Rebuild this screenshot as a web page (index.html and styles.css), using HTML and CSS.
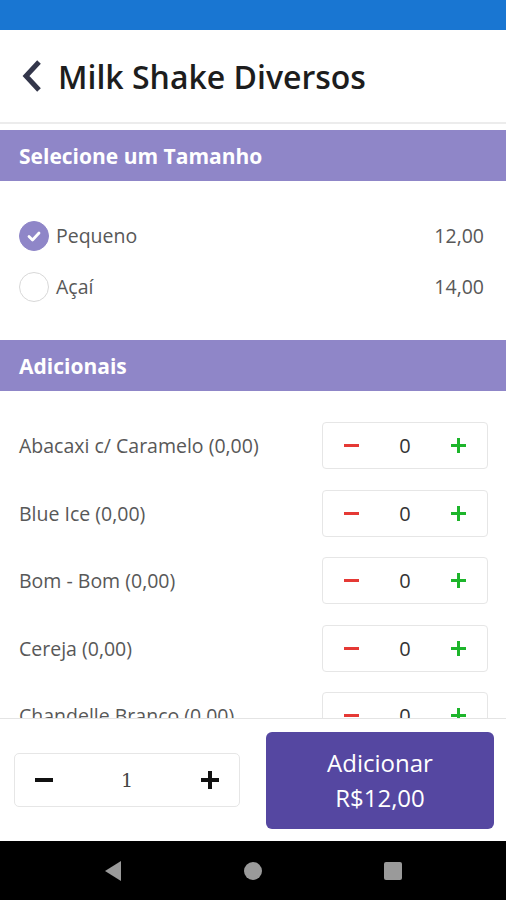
FILE: index.html
```html
<!DOCTYPE html>
<html lang="pt-BR">
<head>
    <meta charset="UTF-8">
    <meta name="viewport" content="width=device-width, initial-scale=1.0">
    <title>Milk Shake Diversos</title>
    <link rel="stylesheet" href="styles.css">
</head>
<body>
    <div class="status-bar"></div>

    <div class="header">
        <svg class="back" width="24" height="34" viewBox="0 0 24 34">
            <path d="M19 3 L6 17 L19 31" fill="none" stroke="#33364a" stroke-width="5" stroke-linejoin="miter"/>
        </svg>
        <h1>Milk Shake Diversos</h1>
    </div>

    <div class="content">
        <div class="section-title">Selecione um Tamanho</div>
        <div class="sizes">
            <div class="size-row">
                <span class="radio checked">
                    <svg width="16" height="16" viewBox="0 0 16 16">
                        <path d="M3 8.5 L6.5 12 L13 5" fill="none" stroke="#fff" stroke-width="2.8" stroke-linecap="round" stroke-linejoin="round"/>
                    </svg>
                </span>
                <span class="size-name">Pequeno</span>
                <span class="size-price">12,00</span>
            </div>
            <div class="size-row">
                <span class="radio"></span>
                <span class="size-name">Açaí</span>
                <span class="size-price">14,00</span>
            </div>
        </div>

        <div class="section-title">Adicionais</div>
        <div class="extras">
            <div class="extra-row">
                <span class="extra-name">Abacaxi c/ Caramelo (0,00)</span>
                <div class="stepper"><span class="minus"></span><span class="qty">0</span><span class="plus"></span></div>
            </div>
            <div class="extra-row">
                <span class="extra-name">Blue Ice (0,00)</span>
                <div class="stepper"><span class="minus"></span><span class="qty">0</span><span class="plus"></span></div>
            </div>
            <div class="extra-row">
                <span class="extra-name">Bom - Bom (0,00)</span>
                <div class="stepper"><span class="minus"></span><span class="qty">0</span><span class="plus"></span></div>
            </div>
            <div class="extra-row">
                <span class="extra-name">Cereja (0,00)</span>
                <div class="stepper"><span class="minus"></span><span class="qty">0</span><span class="plus"></span></div>
            </div>
            <div class="extra-row">
                <span class="extra-name">Chandelle Branco (0,00)</span>
                <div class="stepper"><span class="minus"></span><span class="qty">0</span><span class="plus"></span></div>
            </div>
        </div>
    </div>

    <div class="footer">
        <div class="amount">
            <span class="minus"></span>
            <span class="qty">1</span>
            <span class="plus"></span>
        </div>
        <button class="add">Adicionar<br>R$12,00</button>
    </div>

    <div class="nav-bar">
        <svg width="20" height="22" viewBox="0 0 20 22"><path d="M18 1 L2 11 L18 21 Z" fill="#9a9a9a"/></svg>
        <svg width="20" height="20" viewBox="0 0 20 20"><circle cx="10" cy="10" r="9" fill="#9a9a9a"/></svg>
        <svg width="20" height="20" viewBox="0 0 20 20"><rect x="1" y="1" width="18" height="18" rx="2" fill="#9a9a9a"/></svg>
    </div>
</body>
</html>
```

FILE: styles.css
```css
* {
    margin: 0;
    padding: 0;
    box-sizing: border-box;
}

body {
    width: 506px;
    height: 900px;
    display: flex;
    flex-direction: column;
    font-family: "Open Sans", "Noto Sans", sans-serif;
    color: #585858;
    background: #fff;
    overflow: hidden;
}

.status-bar {
    height: 30px;
    background-color: #1976d2;
}

/* 顶部标题 */
.header {
    height: 94px;
    display: flex;
    align-items: center;
    padding-left: 20px;
    border-bottom: 2px solid #ececec;
}

.back {
    margin-right: 14px;
}

.header h1 {
    font-size: 32px;
    font-weight: 600;
    color: #1d1d1d;
}

.content {
    flex: 1;
    overflow: hidden;
    padding-top: 6px;
}

.section-title {
    height: 51px;
    display: flex;
    align-items: center;
    padding-left: 19px;
    background-color: #8f86c8;
    color: #fff;
    font-size: 21px;
    font-weight: 700;
}

.sizes {
    padding: 29px 22px 28px 19px;
}

.size-row {
    height: 51px;
    display: flex;
    align-items: center;
    font-size: 19.5px;
}

.radio {
    width: 30px;
    height: 30px;
    border-radius: 50%;
    border: 1px solid #d8d8d8;
    margin-right: 7px;
    display: flex;
    justify-content: center;
    align-items: center;
}

.radio.checked {
    background-color: #8f86c8;
    border-color: #8f86c8;
}

.size-name {
    flex: 1;
}

.extras {
    padding: 31px 18px 0 19px;
}

.extra-row {
    height: 47px;
    margin-bottom: 20.5px;
    display: flex;
    align-items: center;
    justify-content: space-between;
    font-size: 19.5px;
}

.stepper {
    width: 166px;
    height: 47px;
    border: 1px solid #e6e6e6;
    border-radius: 4px;
    display: flex;
    align-items: center;
    justify-content: space-between;
    padding: 0 21px;
}

.stepper .qty {
    font-size: 20px;
    color: #333;
}

/* 加减号 */
.minus, .plus {
    position: relative;
    width: 15px;
    height: 15px;
}

.minus::before, .plus::before, .plus::after {
    content: "";
    position: absolute;
    left: 0;
    top: 6px;
    width: 15px;
    height: 3px;
}

.plus::after {
    left: 6px;
    top: 0;
    width: 3px;
    height: 15px;
}

.stepper .minus::before {
    background-color: #e53935;
}

.stepper .plus::before, .stepper .plus::after {
    background-color: #1db52b;
}

.footer {
    height: 123px;
    border-top: 1px solid #e4e4e4;
    display: flex;
    align-items: center;
    justify-content: space-between;
    padding: 0 12px 0 14px;
}

.amount {
    width: 226px;
    height: 54px;
    border: 1px solid #e6e6e6;
    border-radius: 5px;
    display: flex;
    align-items: center;
    justify-content: space-between;
    padding: 0 20px 0 20px;
}

.amount .minus, .amount .plus {
    width: 18px;
    height: 18px;
}

.amount .minus::before, .amount .plus::before {
    width: 18px;
    top: 7px;
    height: 4px;
    background-color: #111;
}

.amount .plus::after {
    left: 7px;
    width: 4px;
    height: 18px;
    background-color: #111;
}

.amount .qty {
    font-family: "DejaVu Serif", serif;
    font-size: 19px;
    color: #444;
}

.add {
    width: 228px;
    height: 97px;
    border: none;
    border-radius: 6px;
    background-color: #5547a1;
    color: #fff;
    font-family: "Open Sans", "Noto Sans", sans-serif;
    font-size: 24px;
    line-height: 35px;
}

.nav-bar {
    height: 59px;
    background-color: #000;
    display: flex;
    align-items: center;
    justify-content: space-between;
    padding: 0 103px 0 103px;
}
```
